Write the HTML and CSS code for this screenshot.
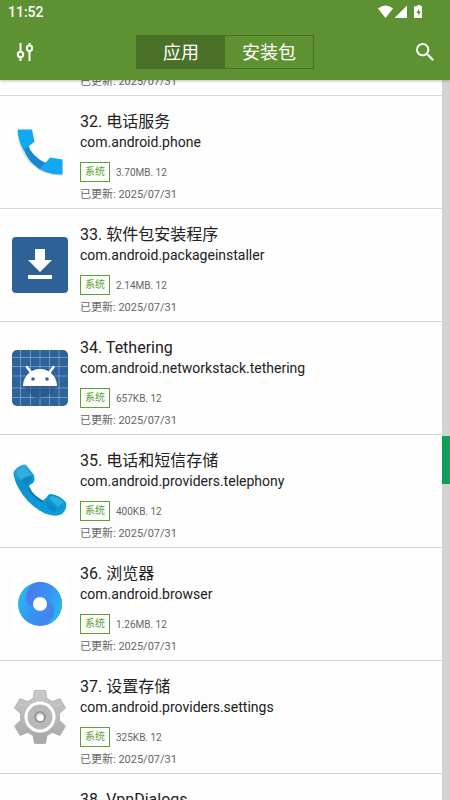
FILE: index.html
```html
<!DOCTYPE html>
<html lang="zh-CN">
<head>
<meta charset="utf-8">
<meta name="viewport" content="width=device-width, initial-scale=1">
<title>应用</title>
<link rel="stylesheet" href="styles.css">
</head>
<body>
<header class="top">
  <div class="status">
    <span class="clock">11:52</span>
    <svg class="status-icons" width="45" height="14" viewBox="0 0 45 14" fill="#fff" aria-hidden="true">
      <path d="M0 3.600Q7.500-2.400 15 3.600L7.500 13z"/>
      <path d="M29 .5V13H16.500z"/>
      <path d="M38 1.200h1.500V0h3v1.200H44V13h-8V1.200z"/>
      <path d="M41 3.500 38.400 8h2v3l2.600-4.500h-2z" fill="#5d9132"/>
    </svg>
  </div>
  <nav class="bar">
    <button class="icon-button" type="button" aria-label="筛选">
      <svg width="18" height="20" viewBox="0 0 18 20" fill="none" stroke="#fff" stroke-width="2" aria-hidden="true">
        <path d="M4.500 1v8M4.500 15v4M13.500 1v2M13.500 9v10"/>
        <circle cx="4.500" cy="12.500" r="2.700"/>
        <circle cx="13.500" cy="6.200" r="2.700"/>
      </svg>
    </button>
    <div class="tabs">
      <button class="tab active" type="button">应用</button>
      <button class="tab" type="button">安装包</button>
    </div>
    <button class="icon-button" type="button" aria-label="搜索">
      <svg width="18" height="18" viewBox="3 3 17.500 17.500" fill="#fff" aria-hidden="true">
        <path d="M15.500 14h-.79l-.28-.27A6.470 6.470 0 0 0 16 9.500 6.500 6.500 0 1 0 9.500 16c1.610 0 3.090-.59 4.230-1.570l.27.28v.79l5 4.990L20.490 19zm-6 0C7.010 14 5 11.990 5 9.500S7.010 5 9.500 5 14 7.010 14 9.500 11.990 14 9.500 14z"/>
      </svg>
    </button>
  </nav>
</header>
<main class="content">
  <ul class="list">
    <li class="row row-cut">
      <div class="icon"></div>
      <div class="info"><p class="date">已更新: 2025/07/31</p></div>
    </li>
    <li class="row">
      <svg class="icon" viewBox="0 0 56 56" aria-hidden="true">
        <path d="M5.500 6H20L22.500 18 15.500 24Q20 34 31 39L38 34.500 50.500 36V50.500C27 51.500 6 34 5.500 6z" fill="#9aa" opacity=".35" transform="translate(0 1)"/>
        <path d="M11.500 25 15.500 20Q20 33 34 39L28 45.500Q16 38 11.500 25z" fill="#1389d4"/>
        <path d="M5.500 5.500H20L22.500 17.500 11.500 26Q6 17 5.500 5.500z" fill="#12a8f4"/>
        <path d="M28 45.500 38 33.500 50.500 35.500V50.500Q38 51 28 45.500z" fill="#12a8f4"/>
      </svg>
      <div class="info">
        <h2 class="name">32. 电话服务</h2>
        <p class="package">com.android.phone</p>
        <p class="meta"><span class="badge">系统</span><span>3.70MB. 12</span></p>
        <p class="date">已更新: 2025/07/31</p>
      </div>
    </li>
    <li class="row">
      <svg class="icon" viewBox="0 0 56 56" aria-hidden="true">
        <rect width="56" height="56" rx="4" fill="#2e6195"/>
        <path d="M23 12h10v11h7L28 35 16 23h7zM16 38h24v4H16z" fill="#fff"/>
      </svg>
      <div class="info">
        <h2 class="name">33. 软件包安装程序</h2>
        <p class="package">com.android.packageinstaller</p>
        <p class="meta"><span class="badge">系统</span><span>2.14MB. 12</span></p>
        <p class="date">已更新: 2025/07/31</p>
      </div>
    </li>
    <li class="row">
      <svg class="icon" viewBox="0 0 56 56" aria-hidden="true">
        <rect width="56" height="56" rx="5" fill="#2e629b"/>
        <path d="M8.500 0v56M18.500 0v56M28 0v56M37.500 0v56M47 0v56M0 7.500h56M0 16.500h56M0 26h56M0 38h56M0 47.500h56" stroke="#7ca4cd" stroke-width=".8"/>
        <path d="M11 36 24 49Q40 46 45 36z" fill="#24507f" opacity=".5"/>
        <path d="M11 36C11 27 18 19 28 19S45 27 45 36z" fill="#fff"/>
        <path d="m15 17 4.500 6M41.500 17 37 23" stroke="#fff" stroke-width="2.500" stroke-linecap="round"/>
        <circle cx="21" cy="29" r="1.800" fill="#2e629b"/><circle cx="35" cy="29" r="1.800" fill="#2e629b"/>
      </svg>
      <div class="info">
        <h2 class="name">34. Tethering</h2>
        <p class="package">com.android.networkstack.tethering</p>
        <p class="meta"><span class="badge">系统</span><span>657KB. 12</span></p>
        <p class="date">已更新: 2025/07/31</p>
      </div>
    </li>
    <li class="row">
      <svg class="icon" viewBox="0 0 56 56" aria-hidden="true">
        <defs>
          <linearGradient id="handset" x1=".3" y1="0" x2=".2" y2="1">
            <stop offset="0" stop-color="#2caedb"/><stop offset=".4" stop-color="#0c92cd"/><stop offset="1" stop-color="#0f9cdc"/>
          </linearGradient>
          <filter id="soften"><feGaussianBlur stdDeviation=".7"/></filter>
        </defs>
        <path d="M1.500 9Q5 3 12 1.500 14 1 15 3L22 12Q23.500 18 21 20L17 22.500Q19 31 31 37.500L35 34Q36 31 39 31 48 32 54 39.500 55.500 46 50 51 43 54.500 33 50.500 16 42 7 26 1 15 1.500 9z" fill="url(#handset)"/>
        <g filter="url(#soften)">
          <path d="M4 9Q7 5 12.500 3.500L19 12Q13 13 8 17z" fill="#30aed8"/>
          <path d="M9 18Q14 13 20 13L20.500 17Q17 19 14.500 22z" fill="#0880ba" opacity=".6"/>
          <path d="M37 35 40 33Q47 34 52 40 48 41 46 44z" fill="#2cb2dc"/>
          <path d="M34 38 44 44 44 50 36 46z" fill="#0880ba" opacity=".5"/>
          <path d="M17 25Q20 33 31 39" fill="none" stroke="#0873ad" stroke-width="1.500"/>
        </g>
      </svg>
      <div class="info">
        <h2 class="name">35. 电话和短信存储</h2>
        <p class="package">com.android.providers.telephony</p>
        <p class="meta"><span class="badge">系统</span><span>400KB. 12</span></p>
        <p class="date">已更新: 2025/07/31</p>
      </div>
    </li>
    <li class="row">
      <svg class="icon" viewBox="0 0 56 56" aria-hidden="true">
        <defs>
          <linearGradient id="ring-left" gradientUnits="userSpaceOnUse" x1="6" y1="22" x2="42" y2="38">
            <stop offset="0" stop-color="#27b8f0"/><stop offset=".45" stop-color="#3596f4"/><stop offset="1" stop-color="#4680ee"/>
          </linearGradient>
          <linearGradient id="ring-right" gradientUnits="userSpaceOnUse" x1="14" y1="18" x2="50" y2="32">
            <stop offset="0" stop-color="#4b78ea"/><stop offset=".5" stop-color="#3c90f4"/><stop offset="1" stop-color="#27b8f0"/>
          </linearGradient>
        </defs>
        <rect width="56" height="56" rx="4" fill="#fff"/>
        <circle cx="28" cy="28" r="22" fill="url(#ring-left)"/>
        <path d="M24 6.400C12 12 11 28 22 33L28 28 34 23C45 28 45 43 32 49.600A21.900 21.900 0 0 0 24 6.400z" fill="url(#ring-right)"/>
        <circle cx="28" cy="28" r="7" fill="#fff"/>
      </svg>
      <div class="info">
        <h2 class="name">36. 浏览器</h2>
        <p class="package">com.android.browser</p>
        <p class="meta"><span class="badge">系统</span><span>1.26MB. 12</span></p>
        <p class="date">已更新: 2025/07/31</p>
      </div>
    </li>
    <li class="row">
      <svg class="icon" viewBox="0 0 56 56" aria-hidden="true">
        <defs>
          <linearGradient id="metal" x1="0" y1="0" x2="0" y2="1">
            <stop offset="0" stop-color="#cacaca"/><stop offset="1" stop-color="#a6a6a6"/>
          </linearGradient>
        </defs>
        <path d="M22.500 1.500h11l1.500 8 5.500 3 7.500-3 5.500 9.500-6 5.500v7l6 5.500L48 46.500l-7.500-3-5.500 3-1.500 8h-11l-1.500-8-5.500-3-7.500 3L2.500 37l6-5.500v-7l-6-5.500L8 9.500l7.500 3 5.500-3z" fill="url(#metal)" stroke="#aaa" stroke-width=".8" stroke-linejoin="round"/>
        <circle cx="28" cy="28" r="14" fill="#b8b8b8" stroke="#fff" stroke-width="3"/>
        <circle cx="28" cy="28" r="5" fill="#d4d4d4" stroke="#8c8c8c" stroke-width="1.500"/>
        <circle cx="28.500" cy="29" r="3" fill="#fff"/>
      </svg>
      <div class="info">
        <h2 class="name">37. 设置存储</h2>
        <p class="package">com.android.providers.settings</p>
        <p class="meta"><span class="badge">系统</span><span>325KB. 12</span></p>
        <p class="date">已更新: 2025/07/31</p>
      </div>
    </li>
    <li class="row">
      <div class="icon"></div>
      <div class="info"><h2 class="name">38. VpnDialogs</h2></div>
    </li>
  </ul>
  <div class="scrollbar"><div class="thumb"></div></div>
</main>
</body>
</html>
```
FILE: styles.css
```css
* {
  box-sizing: border-box;
}

body {
  margin: 0;
  height: 100vh;
  display: flex;
  flex-direction: column;
  overflow: hidden;
  background: #fdfdfd;
  color: #212121;
  font-family: Roboto, "Noto Sans CJK SC", sans-serif;
}

h2,
p,
ul {
  margin: 0;
  padding: 0;
  font-weight: 400;
}

button {
  margin: 0;
  padding: 0;
  border: 0;
  background: none;
  color: #fff;
  font: inherit;
}

.top {
  flex: none;
  z-index: 1;
  background: #5d9132;
  color: #fff;
  box-shadow: 0 1px 3px rgba(0, 0, 0, 0.25);
}

.status {
  display: flex;
  align-items: center;
  justify-content: space-between;
  height: 24px;
  padding: 0 27px 0 8px;
}

.clock {
  font-size: 14px;
  font-weight: 500;
  line-height: 24px;
}

.bar {
  display: flex;
  align-items: center;
  justify-content: space-between;
  height: 56px;
}

.icon-button {
  display: flex;
  align-items: center;
  justify-content: center;
  width: 50px;
  height: 48px;
}

.tabs {
  display: flex;
  border: 1px solid #487128;
}

.tab {
  width: 88px;
  height: 32px;
  padding-top: 1px;
  font-size: 18px;
  line-height: 32px;
}

.tab.active {
  background: #4a7128;
}

.content {
  flex: 1;
  display: flex;
  min-height: 0;
  overflow: hidden;
}

.list {
  flex: 1;
  list-style: none;
}

.row {
  display: flex;
  align-items: center;
  gap: 12px;
  height: 113px;
  padding-left: 12px;
  border-bottom: 1px solid #d6d6d6;
}

.row-cut {
  align-items: flex-end;
  height: 16px;
}

.icon {
  flex: none;
  width: 56px;
  height: 56px;
}

.info {
  align-self: stretch;
  padding: 15px 0 5px;
}

.row-cut .info {
  align-self: flex-end;
}

.name {
  font-size: 16px;
  line-height: 22px;
}

.package {
  font-size: 14px;
  line-height: 18px;
}

.meta {
  display: flex;
  align-items: center;
  gap: 6px;
  margin-top: 11px;
  color: #666;
  font-size: 10px;
}

.badge {
  width: 30px;
  height: 20px;
  border: 1px solid #5fa033;
  color: #5fa033;
  line-height: 18px;
  text-align: center;
}

.date {
  margin-top: 5px;
  color: #666;
  font-size: 11px;
  line-height: 16px;
}

.scrollbar {
  flex: none;
  display: flex;
  flex-direction: column;
  width: 8px;
  background: #d3d3d3;
}

.scrollbar::before {
  content: "";
  flex: 356;
}

.scrollbar::after {
  content: "";
  flex: 316;
}

.thumb {
  height: 48px;
  background: #129d5a;
}
```
